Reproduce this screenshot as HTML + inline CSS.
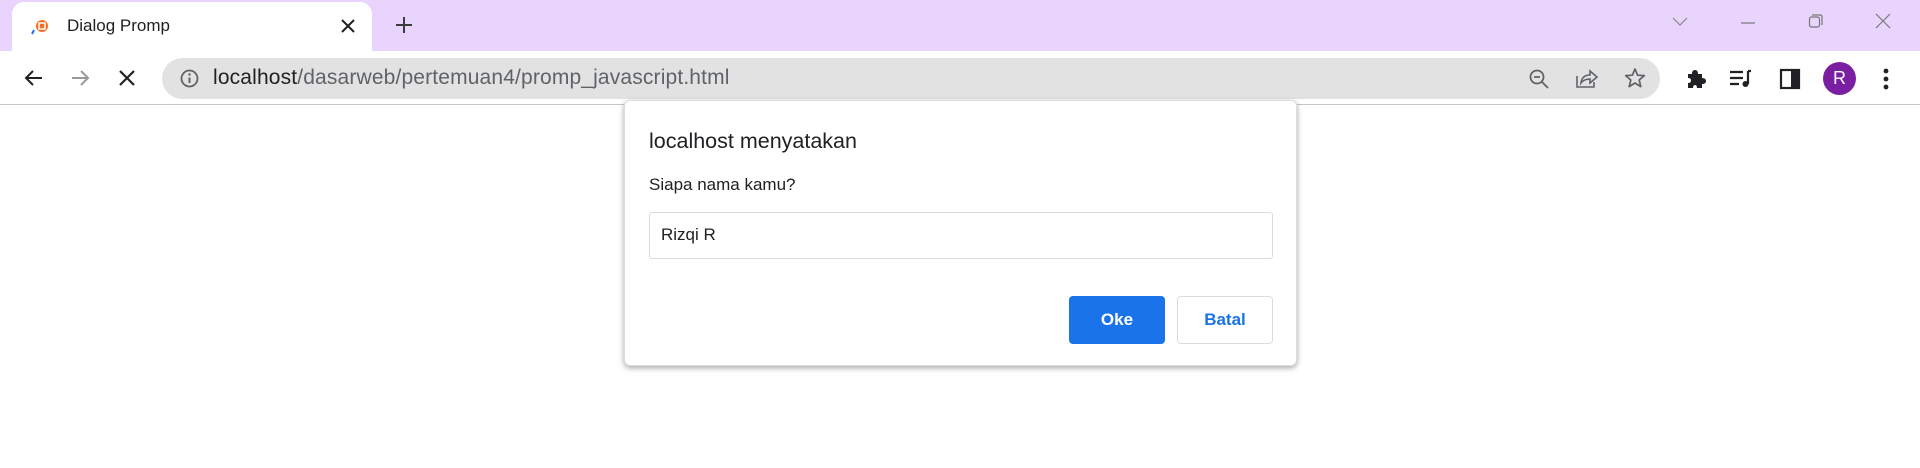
<!DOCTYPE html>
<html><head><style>
*{margin:0;padding:0;box-sizing:border-box}
body{width:1920px;height:468px;background:#fff;font-family:"Liberation Sans",sans-serif;position:relative;overflow:hidden}
.strip{position:absolute;left:0;top:0;width:1920px;height:51px;background:#e9d4fd}
.tab{position:absolute;left:12px;top:2px;width:360px;height:49px;background:#fff;border-radius:12px 12px 0 0}
.tb{position:absolute;left:0;top:51px;width:1920px;height:54px;background:#fff;border-bottom:1px solid #c8c8c8}
.omni{position:absolute;left:162px;top:58px;width:1498px;height:41px;background:#e2e2e2;border-radius:21px}
.abs{position:absolute}
svg{position:absolute;overflow:visible}
.dlg{position:absolute;left:624px;top:100px;width:673px;height:266px;background:#fff;border-radius:6px;box-shadow:0 2px 6px rgba(0,0,0,.35);border:1px solid #ddd}
</style></head><body>
<div class="strip"></div>
<div class="tab"></div>
<svg style="left:30px;top:18px" width="20" height="20"><circle cx="12" cy="8" r="6" fill="#f36f21"/><rect x="9" y="5" width="6" height="6" fill="none" stroke="#fff" stroke-width="1.5"/><path d="M4 12 L2 16" stroke="#1a73e8" stroke-width="2"/></svg>
<div class="abs" style="left:67px;top:16px;font-size:17px;color:#202124">Dialog Promp</div>
<svg style="left:342px;top:20px" width="12" height="12"><path d="M0 0L12 12M12 0L0 12" stroke="#202124" stroke-width="2"/></svg>
<svg style="left:396px;top:17px" width="16" height="16"><path d="M8 0V16M0 8H16" stroke="#3c3c3c" stroke-width="2"/></svg>
<svg style="left:1673px;top:18px" width="14" height="8"><path d="M0 0L7 7L14 0" stroke="#888" fill="none" stroke-width="1.2"/></svg>
<svg style="left:1741px;top:22px" width="14" height="2"><path d="M0 1H14" stroke="#777" stroke-width="1.2"/></svg>
<svg style="left:1809px;top:14px" width="14" height="14"><rect x="0.5" y="3" width="10" height="10" rx="2" fill="none" stroke="#777" stroke-width="1.2"/><path d="M3 1H11Q13 1 13 3V11" fill="none" stroke="#777" stroke-width="1.2"/></svg>
<svg style="left:1876px;top:14px" width="14" height="14"><path d="M0 0L14 14M14 0L0 14" stroke="#777" stroke-width="1.2"/></svg>
<div class="tb"></div>
<svg style="left:24px;top:70px" width="18" height="16"><path d="M18 8H2M9 1L2 8L9 15" fill="none" stroke="#202124" stroke-width="2"/></svg>
<svg style="left:72px;top:70px" width="18" height="16"><path d="M0 8H16M9 1L16 8L9 15" fill="none" stroke="#9a9a9a" stroke-width="2"/></svg>
<svg style="left:120px;top:71px" width="14" height="14"><path d="M0 0L14 14M14 0L0 14" stroke="#202124" stroke-width="2.2"/></svg>
<div class="omni"></div>
<svg style="left:180px;top:69px" width="19" height="19"><circle cx="9.5" cy="9.5" r="8" fill="none" stroke="#5f6368" stroke-width="1.8"/><path d="M9.5 8.5V14" stroke="#5f6368" stroke-width="2"/><circle cx="9.5" cy="5.5" r="1.2" fill="#5f6368"/></svg>
<div class="abs" style="left:213px;top:66px;font-size:21px;color:#5f6368;letter-spacing:0.15px"><span style="color:#202124">localhost</span>/dasarweb/pertemuan4/promp_javascript.html</div>
<svg style="left:1529px;top:69px" width="20" height="20"><circle cx="8" cy="8" r="6.5" fill="none" stroke="#5f6368" stroke-width="1.8"/><path d="M5 8H11M13 13L19 19" stroke="#5f6368" stroke-width="1.8"/></svg>
<svg style="left:1576px;top:68px" width="22" height="20"><path d="M1 8V19H18V14M5 15Q6 7 14 7V3L21 9L14 15V11Q8 11 5 15Z" fill="none" stroke="#5f6368" stroke-width="1.6"/></svg>
<svg style="left:1625px;top:68px" width="20" height="20"><path d="M10 1L12.6 7.2L19.3 7.6L14.2 12L15.8 18.6L10 15L4.2 18.6L5.8 12L0.7 7.6L7.4 7.2Z" fill="none" stroke="#5f6368" stroke-width="1.7" stroke-linejoin="round"/></svg>
<svg style="left:1685px;top:68px" width="21" height="21"><path d="M3 6H7Q7 2 10 2Q13 2 13 6H17V10Q21 10 21 13Q21 16 17 16V20H12Q12 17 10 17Q8 17 8 20H3V15Q6 15 6 12.5Q6 10 3 10Z" fill="#202124"/></svg>
<svg style="left:1730px;top:70px" width="22" height="17"><path d="M0 2H13M0 8H13M0 14H9" stroke="#202124" stroke-width="2.2"/><path d="M18 1H21M18 1V14" stroke="#202124" stroke-width="2.2"/><circle cx="15.5" cy="14" r="3" fill="#202124"/></svg>
<svg style="left:1780px;top:69px" width="20" height="20"><rect x="1" y="1" width="18" height="18" fill="none" stroke="#202124" stroke-width="2.2"/><rect x="11" y="1" width="8" height="18" fill="#202124"/></svg>
<div class="abs" style="left:1823px;top:62px;width:33px;height:33px;border-radius:50%;background:#7b1fa2;color:#fff;font-size:18px;text-align:center;line-height:33px">R</div>
<svg style="left:1882px;top:68px" width="8" height="22"><circle cx="4" cy="3" r="2.4" fill="#202124"/><circle cx="4" cy="11" r="2.4" fill="#202124"/><circle cx="4" cy="19" r="2.4" fill="#202124"/></svg>
<div class="dlg">
<div class="abs" style="left:24px;top:28px;font-size:21.5px;color:#202124">localhost menyatakan</div>
<div class="abs" style="left:24px;top:74px;font-size:17px;color:#202124">Siapa nama kamu?</div>
<div class="abs" style="left:24px;top:111px;width:624px;height:47px;border:1px solid #dadce0;border-radius:3px"></div>
<div class="abs" style="left:36px;top:124px;font-size:17px;color:#202124">Rizqi R</div>
<div class="abs" style="left:444px;top:195px;width:96px;height:48px;background:#1a73e8;border-radius:4px;color:#fff;font-weight:bold;font-size:17px;text-align:center;line-height:48px">Oke</div>
<div class="abs" style="left:552px;top:195px;width:96px;height:48px;border:1px solid #dadce0;border-radius:4px;color:#1a73e8;font-weight:bold;font-size:17px;text-align:center;line-height:46px">Batal</div>
</div>
</body></html>
